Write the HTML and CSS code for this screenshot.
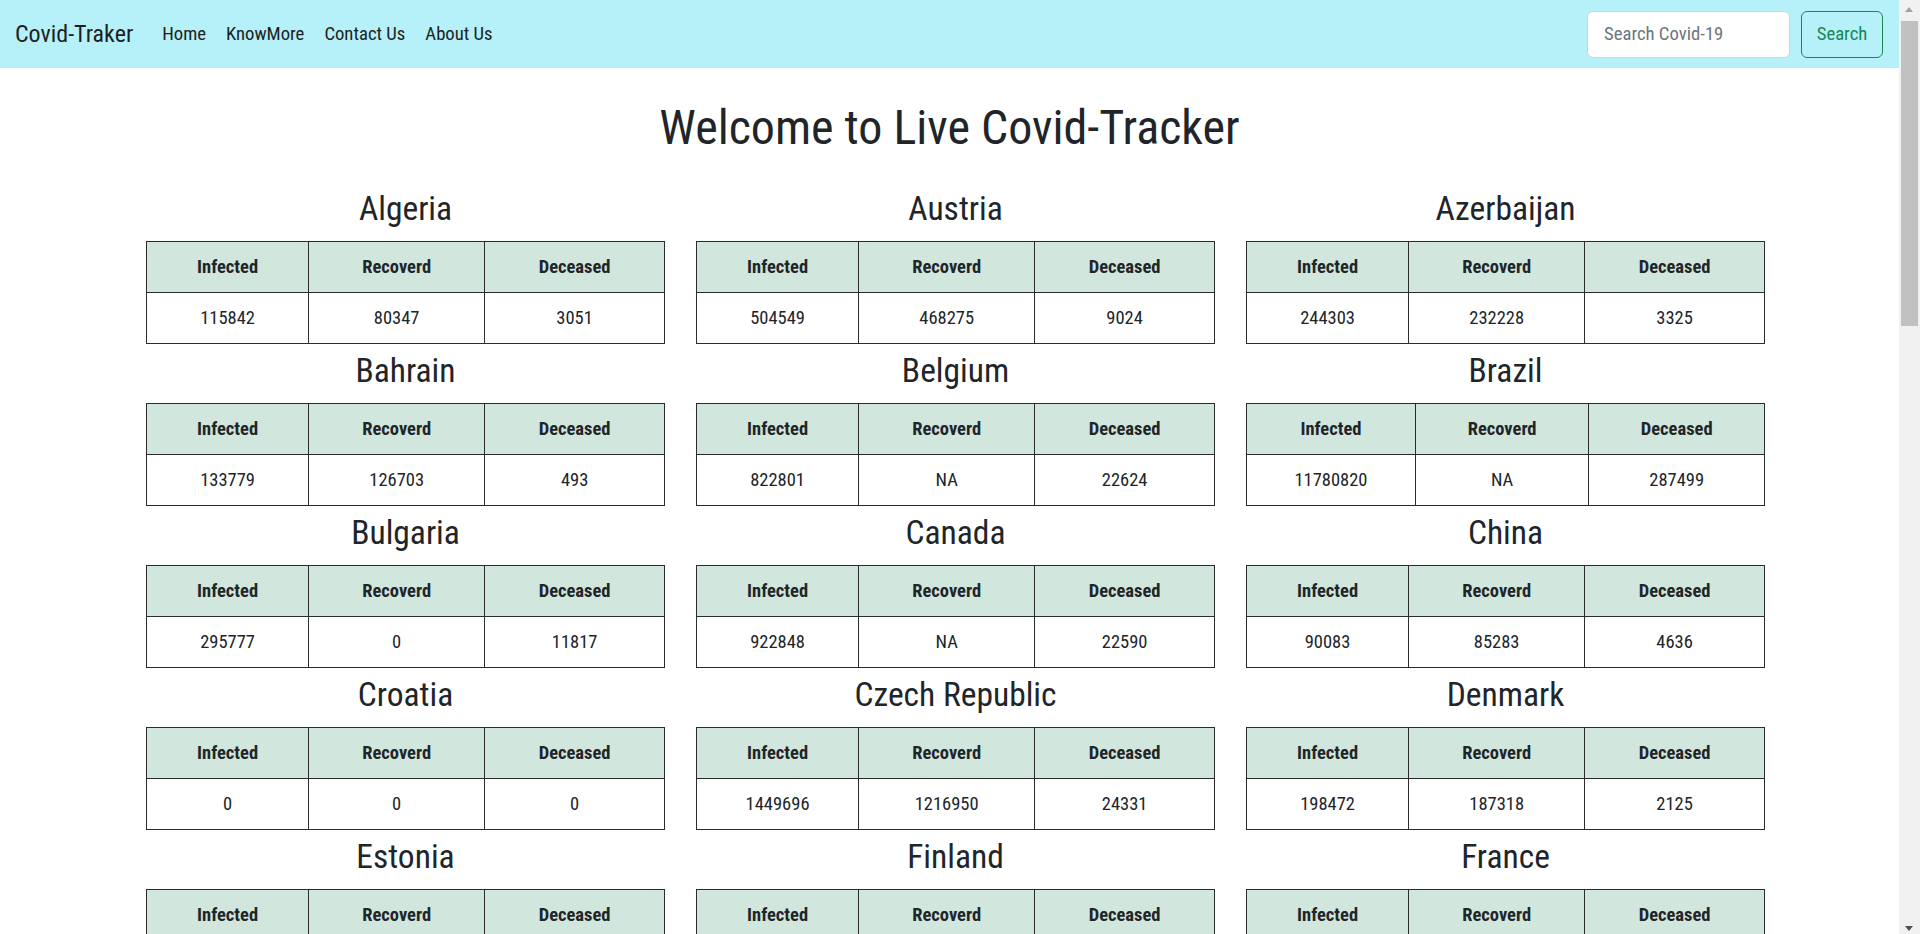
FILE: index.html
```html
<!DOCTYPE html>
<html lang="en">
<head>
<meta charset="utf-8">
<title>Covid-Traker</title>
<link rel="stylesheet" href="styles.css">
</head>
<body>
<nav class="navbar">
  <a class="brand" href="#">Covid-Traker</a>
  <ul class="nav-links">
    <li><a href="#">Home</a></li>
    <li><a href="#">KnowMore</a></li>
    <li><a href="#">Contact Us</a></li>
    <li><a href="#">About Us</a></li>
  </ul>
  <form class="search">
    <input class="search-input" type="search" placeholder="Search Covid-19">
    <button class="search-btn" type="button">Search</button>
  </form>
</nav>

<main class="page">
  <h1 class="title">Welcome to Live Covid-Tracker</h1>
  <div class="grid">
    <section class="country"><h2>Algeria</h2><table class="stats"><thead><tr><th>Infected</th><th>Recoverd</th><th>Deceased</th></tr></thead><tbody><tr><td>115842</td><td>80347</td><td>3051</td></tr></tbody></table></section>
    <section class="country"><h2>Austria</h2><table class="stats"><thead><tr><th>Infected</th><th>Recoverd</th><th>Deceased</th></tr></thead><tbody><tr><td>504549</td><td>468275</td><td>9024</td></tr></tbody></table></section>
    <section class="country"><h2>Azerbaijan</h2><table class="stats"><thead><tr><th>Infected</th><th>Recoverd</th><th>Deceased</th></tr></thead><tbody><tr><td>244303</td><td>232228</td><td>3325</td></tr></tbody></table></section>
    <section class="country"><h2>Bahrain</h2><table class="stats"><thead><tr><th>Infected</th><th>Recoverd</th><th>Deceased</th></tr></thead><tbody><tr><td>133779</td><td>126703</td><td>493</td></tr></tbody></table></section>
    <section class="country"><h2>Belgium</h2><table class="stats"><thead><tr><th>Infected</th><th>Recoverd</th><th>Deceased</th></tr></thead><tbody><tr><td>822801</td><td>NA</td><td>22624</td></tr></tbody></table></section>
    <section class="country"><h2>Brazil</h2><table class="stats stats-wide"><thead><tr><th>Infected</th><th>Recoverd</th><th>Deceased</th></tr></thead><tbody><tr><td>11780820</td><td>NA</td><td>287499</td></tr></tbody></table></section>
    <section class="country"><h2>Bulgaria</h2><table class="stats"><thead><tr><th>Infected</th><th>Recoverd</th><th>Deceased</th></tr></thead><tbody><tr><td>295777</td><td>0</td><td>11817</td></tr></tbody></table></section>
    <section class="country"><h2>Canada</h2><table class="stats"><thead><tr><th>Infected</th><th>Recoverd</th><th>Deceased</th></tr></thead><tbody><tr><td>922848</td><td>NA</td><td>22590</td></tr></tbody></table></section>
    <section class="country"><h2>China</h2><table class="stats"><thead><tr><th>Infected</th><th>Recoverd</th><th>Deceased</th></tr></thead><tbody><tr><td>90083</td><td>85283</td><td>4636</td></tr></tbody></table></section>
    <section class="country"><h2>Croatia</h2><table class="stats"><thead><tr><th>Infected</th><th>Recoverd</th><th>Deceased</th></tr></thead><tbody><tr><td>0</td><td>0</td><td>0</td></tr></tbody></table></section>
    <section class="country"><h2>Czech Republic</h2><table class="stats"><thead><tr><th>Infected</th><th>Recoverd</th><th>Deceased</th></tr></thead><tbody><tr><td>1449696</td><td>1216950</td><td>24331</td></tr></tbody></table></section>
    <section class="country"><h2>Denmark</h2><table class="stats"><thead><tr><th>Infected</th><th>Recoverd</th><th>Deceased</th></tr></thead><tbody><tr><td>198472</td><td>187318</td><td>2125</td></tr></tbody></table></section>
    <section class="country"><h2>Estonia</h2><table class="stats"><thead><tr><th>Infected</th><th>Recoverd</th><th>Deceased</th></tr></thead><tbody><tr><td>94508</td><td>68412</td><td>769</td></tr></tbody></table></section>
    <section class="country"><h2>Finland</h2><table class="stats"><thead><tr><th>Infected</th><th>Recoverd</th><th>Deceased</th></tr></thead><tbody><tr><td>67958</td><td>46000</td><td>771</td></tr></tbody></table></section>
    <section class="country"><h2>France</h2><table class="stats"><thead><tr><th>Infected</th><th>Recoverd</th><th>Deceased</th></tr></thead><tbody><tr><td>4078133</td><td>279160</td><td>91679</td></tr></tbody></table></section>
    <section class="country"><h2>Germany</h2><table class="stats"><thead><tr><th>Infected</th><th>Recoverd</th><th>Deceased</th></tr></thead><tbody><tr><td>2595156</td><td>2377700</td><td>74358</td></tr></tbody></table></section>
    <section class="country"><h2>Greece</h2><table class="stats"><thead><tr><th>Infected</th><th>Recoverd</th><th>Deceased</th></tr></thead><tbody><tr><td>222282</td><td>NA</td><td>7123</td></tr></tbody></table></section>
    <section class="country"><h2>Hungary</h2><table class="stats"><thead><tr><th>Infected</th><th>Recoverd</th><th>Deceased</th></tr></thead><tbody><tr><td>541963</td><td>302316</td><td>17740</td></tr></tbody></table></section>
    <section class="country"><h2>Iceland</h2><table class="stats"><thead><tr><th>Infected</th><th>Recoverd</th><th>Deceased</th></tr></thead><tbody><tr><td>6073</td><td>6013</td><td>29</td></tr></tbody></table></section>
    <section class="country"><h2>India</h2><table class="stats"><thead><tr><th>Infected</th><th>Recoverd</th><th>Deceased</th></tr></thead><tbody><tr><td>11474605</td><td>11083679</td><td>159044</td></tr></tbody></table></section>
    <section class="country"><h2>Indonesia</h2><table class="stats"><thead><tr><th>Infected</th><th>Recoverd</th><th>Deceased</th></tr></thead><tbody><tr><td>1437283</td><td>1268185</td><td>38915</td></tr></tbody></table></section>
    <section class="country"><h2>Iran</h2><table class="stats"><thead><tr><th>Infected</th><th>Recoverd</th><th>Deceased</th></tr></thead><tbody><tr><td>1766271</td><td>1510289</td><td>61580</td></tr></tbody></table></section>
    <section class="country"><h2>Ireland</h2><table class="stats"><thead><tr><th>Infected</th><th>Recoverd</th><th>Deceased</th></tr></thead><tbody><tr><td>228215</td><td>23364</td><td>4534</td></tr></tbody></table></section>
    <section class="country"><h2>Israel</h2><table class="stats"><thead><tr><th>Infected</th><th>Recoverd</th><th>Deceased</th></tr></thead><tbody><tr><td>826719</td><td>807412</td><td>6091</td></tr></tbody></table></section>
    <section class="country"><h2>Italy</h2><table class="stats"><thead><tr><th>Infected</th><th>Recoverd</th><th>Deceased</th></tr></thead><tbody><tr><td>3306711</td><td>2654813</td><td>104241</td></tr></tbody></table></section>
    <section class="country"><h2>Japan</h2><table class="stats"><thead><tr><th>Infected</th><th>Recoverd</th><th>Deceased</th></tr></thead><tbody><tr><td>450934</td><td>430130</td><td>8809</td></tr></tbody></table></section>
    <section class="country"><h2>Jordan</h2><table class="stats"><thead><tr><th>Infected</th><th>Recoverd</th><th>Deceased</th></tr></thead><tbody><tr><td>477322</td><td>410419</td><td>5324</td></tr></tbody></table></section>
    <section class="country"><h2>Latvia</h2><table class="stats"><thead><tr><th>Infected</th><th>Recoverd</th><th>Deceased</th></tr></thead><tbody><tr><td>94269</td><td>85711</td><td>1771</td></tr></tbody></table></section>
    <section class="country"><h2>Lithuania</h2><table class="stats"><thead><tr><th>Infected</th><th>Recoverd</th><th>Deceased</th></tr></thead><tbody><tr><td>206001</td><td>190117</td><td>3395</td></tr></tbody></table></section>
    <section class="country"><h2>Luxembourg</h2><table class="stats"><thead><tr><th>Infected</th><th>Recoverd</th><th>Deceased</th></tr></thead><tbody><tr><td>59020</td><td>54797</td><td>690</td></tr></tbody></table></section>
    <section class="country"><h2>Malaysia</h2><table class="stats"><thead><tr><th>Infected</th><th>Recoverd</th><th>Deceased</th></tr></thead><tbody><tr><td>330421</td><td>313775</td><td>1224</td></tr></tbody></table></section>
    <section class="country"><h2>Mexico</h2><table class="stats"><thead><tr><th>Infected</th><th>Recoverd</th><th>Deceased</th></tr></thead><tbody><tr><td>2182188</td><td>1709563</td><td>196606</td></tr></tbody></table></section>
    <section class="country"><h2>Netherlands</h2><table class="stats"><thead><tr><th>Infected</th><th>Recoverd</th><th>Deceased</th></tr></thead><tbody><tr><td>1167783</td><td>NA</td><td>16149</td></tr></tbody></table></section>
    <section class="country"><h2>New Zealand</h2><table class="stats"><thead><tr><th>Infected</th><th>Recoverd</th><th>Deceased</th></tr></thead><tbody><tr><td>2434</td><td>2345</td><td>26</td></tr></tbody></table></section>
    <section class="country"><h2>Norway</h2><table class="stats"><thead><tr><th>Infected</th><th>Recoverd</th><th>Deceased</th></tr></thead><tbody><tr><td>85743</td><td>NA</td><td>642</td></tr></tbody></table></section>
    <section class="country"><h2>Pakistan</h2><table class="stats"><thead><tr><th>Infected</th><th>Recoverd</th><th>Deceased</th></tr></thead><tbody><tr><td>615810</td><td>574894</td><td>13717</td></tr></tbody></table></section>
    <section class="country"><h2>Poland</h2><table class="stats"><thead><tr><th>Infected</th><th>Recoverd</th><th>Deceased</th></tr></thead><tbody><tr><td>2010607</td><td>1662000</td><td>48807</td></tr></tbody></table></section>
    <section class="country"><h2>Portugal</h2><table class="stats"><thead><tr><th>Infected</th><th>Recoverd</th><th>Deceased</th></tr></thead><tbody><tr><td>816055</td><td>765987</td><td>16743</td></tr></tbody></table></section>
    <section class="country"><h2>Romania</h2><table class="stats"><thead><tr><th>Infected</th><th>Recoverd</th><th>Deceased</th></tr></thead><tbody><tr><td>881225</td><td>797286</td><td>21974</td></tr></tbody></table></section>
    <section class="country"><h2>Russia</h2><table class="stats"><thead><tr><th>Infected</th><th>Recoverd</th><th>Deceased</th></tr></thead><tbody><tr><td>4400045</td><td>3998216</td><td>92494</td></tr></tbody></table></section>
    <section class="country"><h2>Saudi Arabia</h2><table class="stats"><thead><tr><th>Infected</th><th>Recoverd</th><th>Deceased</th></tr></thead><tbody><tr><td>383592</td><td>374129</td><td>6582</td></tr></tbody></table></section>
    <section class="country"><h2>Serbia</h2><table class="stats"><thead><tr><th>Infected</th><th>Recoverd</th><th>Deceased</th></tr></thead><tbody><tr><td>545874</td><td>NA</td><td>4909</td></tr></tbody></table></section>
    <section class="country"><h2>Slovakia</h2><table class="stats"><thead><tr><th>Infected</th><th>Recoverd</th><th>Deceased</th></tr></thead><tbody><tr><td>340919</td><td>250713</td><td>8497</td></tr></tbody></table></section>
    <section class="country"><h2>Slovenia</h2><table class="stats"><thead><tr><th>Infected</th><th>Recoverd</th><th>Deceased</th></tr></thead><tbody><tr><td>199969</td><td>189125</td><td>3919</td></tr></tbody></table></section>
    <section class="country"><h2>South Africa</h2><table class="stats"><thead><tr><th>Infected</th><th>Recoverd</th><th>Deceased</th></tr></thead><tbody><tr><td>1530033</td><td>1455516</td><td>51724</td></tr></tbody></table></section>
    <section class="country"><h2>Spain</h2><table class="stats"><thead><tr><th>Infected</th><th>Recoverd</th><th>Deceased</th></tr></thead><tbody><tr><td>3206116</td><td>NA</td><td>72910</td></tr></tbody></table></section>
    <section class="country"><h2>Sweden</h2><table class="stats"><thead><tr><th>Infected</th><th>Recoverd</th><th>Deceased</th></tr></thead><tbody><tr><td>725190</td><td>NA</td><td>13262</td></tr></tbody></table></section>
    <section class="country"><h2>Switzerland</h2><table class="stats"><thead><tr><th>Infected</th><th>Recoverd</th><th>Deceased</th></tr></thead><tbody><tr><td>575467</td><td>317600</td><td>10178</td></tr></tbody></table></section>
  </div>
</main>

<div class="scrollbar" aria-hidden="true">
  <span class="sb-arrow sb-up"></span>
  <span class="sb-thumb"></span>
  <span class="sb-arrow sb-down"></span>
</div>
</body>
</html>
```

FILE: styles.css
```css
* {
  box-sizing: border-box;
}

html, body {
  margin: 0;
  padding: 0;
}

body {
  font-family: "Roboto Condensed", "Noto Sans", "DejaVu Sans Condensed", sans-serif;
  font-stretch: condensed;
  color: #212529;
  background: #ffffff;
  padding-right: 21px;
}

a {
  color: inherit;
  text-decoration: none;
}

/* ---------- navbar ---------- */
.navbar {
  display: flex;
  align-items: center;
  height: 68px;
  padding: 0 16px 0 15px;
  background: #b6f0f8;
}

.brand {
  font-size: 24px;
  color: #1c1f23;
  margin-right: 29px;
  line-height: 1;
}

.nav-links {
  display: flex;
  gap: 20px;
  list-style: none;
  margin: 0;
  padding: 0;
  flex: 1;
}

.nav-links a {
  font-size: 18.7px;
  color: #1c1f23;
}

.search {
  display: flex;
  align-items: center;
  gap: 11px;
  margin: 0;
}

.search-input {
  width: 203px;
  height: 47px;
  padding: 0 16px;
  font: inherit;
  font-size: 18.7px;
  color: #212529;
  background: #fff;
  border: 1px solid #ced4da;
  border-radius: 6px;
  outline: none;
}

.search-input::placeholder {
  color: #6c757d;
}

.search-btn {
  width: 82px;
  height: 47px;
  padding: 0;
  font: inherit;
  font-size: 18.7px;
  color: #198754;
  background: transparent;
  border: 1px solid #198754;
  border-radius: 6px;
}

/* ---------- page ---------- */
.title {
  margin: 31px 0 32px;
  text-align: center;
  font-size: 48px;
  line-height: 58px;
  font-weight: 400;
}

.grid {
  display: grid;
  grid-template-columns: repeat(3, 519px);
  column-gap: 31px;
  row-gap: 0;
  width: 1619px;
  padding-left: 12px;
  box-sizing: content-box;
  margin: 0 auto;
}

.country {
  padding-bottom: 7px;
}

.country h2 {
  margin: 0 0 12px;
  text-align: center;
  font-size: 33.5px;
  line-height: 40px;
  font-weight: 400;
}

.stats {
  width: 100%;
  border-collapse: collapse;
  table-layout: fixed;
  text-align: center;
}

.stats th,
.stats td {
  height: 51px;
  padding: 0;
  border: 1px solid #2b2b2b;
  vertical-align: middle;
  font-size: 18.5px;
}

.stats th {
  background: #d1e7dd;
  font-weight: 700;
  font-size: 18.5px;
}

.stats th:nth-child(1) { width: 31.3%; }
.stats th:nth-child(2) { width: 34%; }
.stats th:nth-child(3) { width: 34.7%; }

.stats-wide th:nth-child(1) { width: 32.6%; }
.stats-wide th:nth-child(2) { width: 33.5%; }
.stats-wide th:nth-child(3) { width: 33.9%; }

/* ---------- fake window scrollbar ---------- */
.scrollbar {
  position: fixed;
  top: 0;
  right: 0;
  width: 21px;
  height: 100vh;
  background: #f1f1f1;
}

.sb-thumb {
  position: absolute;
  top: 21px;
  left: 2px;
  width: 17px;
  height: 305px;
  background: #c1c1c1;
}

.sb-arrow {
  position: absolute;
  left: 6px;
  width: 0;
  height: 0;
  border-left: 4.5px solid transparent;
  border-right: 4.5px solid transparent;
}

.sb-up {
  top: 7px;
  border-bottom: 5px solid #a3a3a3;
}

.sb-down {
  bottom: 3px;
  border-top: 5px solid #505050;
}
```
